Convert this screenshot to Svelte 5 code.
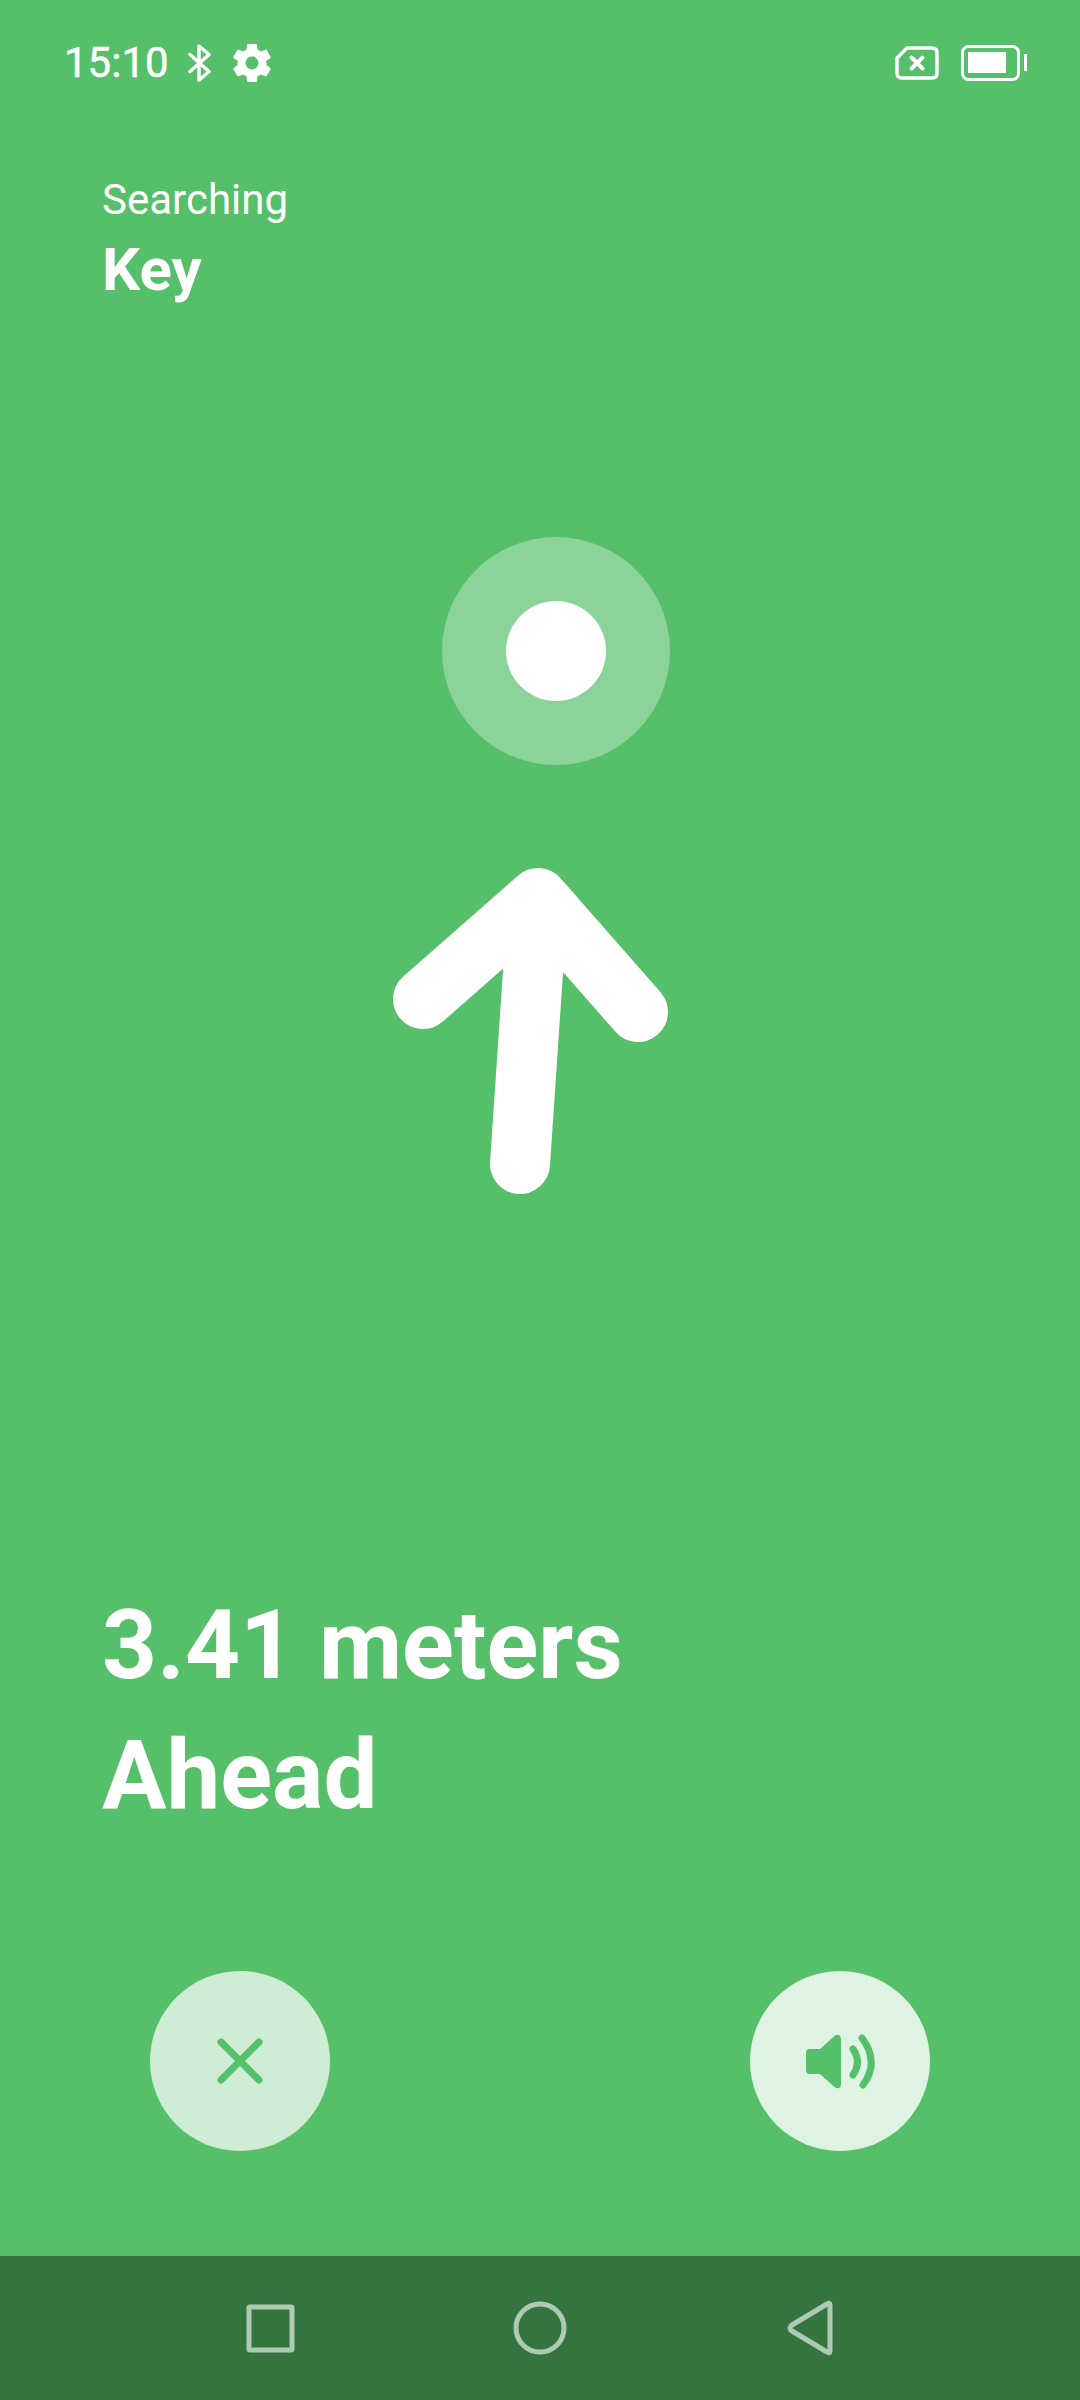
<script>
    const target = { name: "Key", distance: "3.41 meters", direction: "Ahead" };
</script>

<div class="screen">
    <div class="status-bar">
        <span class="clock">15:10</span>
        <svg class="ic-bt" viewBox="0 0 24 38" aria-hidden="true">
            <path d="M2 10.5 L21 27.5 L11 36 V2 L21 10.5 L2 27.5" />
        </svg>
        <svg class="ic-gear" viewBox="2.5 2.5 19 19" aria-hidden="true">
            <path d="M19.14 12.94c.04-.3.06-.61.06-.94 0-.32-.02-.64-.07-.94l2.03-1.58c.18-.14.23-.41.12-.61l-1.92-3.32c-.12-.22-.37-.29-.59-.22l-2.39.96c-.5-.38-1.03-.7-1.62-.94l-.36-2.54c-.04-.24-.24-.41-.48-.41h-3.84c-.24 0-.43.17-.47.41l-.36 2.54c-.59.24-1.13.57-1.62.94l-2.39-.96c-.22-.08-.47 0-.59.22L2.74 8.87c-.12.21-.08.47.12.61l2.03 1.58c-.05.3-.09.63-.09.94s.02.64.07.94l-2.03 1.58c-.18.14-.23.41-.12.61l1.92 3.32c.12.22.37.29.59.22l2.39-.96c.5.38 1.03.7 1.62.94l.36 2.54c.05.24.24.41.48.41h3.84c.24 0 .44-.17.47-.41l.36-2.54c.59-.24 1.13-.56 1.62-.94l2.39.96c.22.08.47 0 .59-.22l1.92-3.32c.12-.22.07-.47-.12-.61l-2.01-1.58zM12 15.2c-1.77 0-3.2-1.43-3.2-3.2s1.43-3.2 3.2-3.2 3.2 1.43 3.2 3.2-1.43 3.2-3.2 3.2z" />
        </svg>
        <span class="spacer"></span>
        <svg class="ic-sim" viewBox="0 0 44 34" aria-hidden="true">
            <path d="M12 2 H37 Q42 2 42 7 V27 Q42 32 37 32 H7 Q2 32 2 27 V12 Z" />
            <path class="x" d="M16.500 11.500 L27.500 22.500 M27.500 11.500 L16.500 22.500" />
        </svg>
        <svg class="ic-battery" viewBox="0 0 66 36" aria-hidden="true">
            <rect class="shell" x="1.500" y="1.500" width="56" height="33" rx="6" />
            <rect class="level" x="7" y="7" width="38" height="21" />
            <rect class="level" x="63" y="9" width="3" height="17" />
        </svg>
    </div>

    <header class="header">
        <div class="searching">Searching</div>
        <div class="name">{target.name}</div>
    </header>

    <svg class="compass" viewBox="0 0 1080 900" aria-hidden="true">
        <circle class="ring" cx="556" cy="351" r="114" />
        <circle class="dot" cx="556" cy="351" r="50" />
        <path class="arrow" d="M423 699 L538 598 L638 712 M538 598 L520 864" />
    </svg>

    <div class="reading">
        <div>{target.distance}</div>
        <div>{target.direction}</div>
    </div>

    <div class="actions">
        <button type="button" class="round close" aria-label="Close">
            <svg viewBox="0 0 180 180" aria-hidden="true">
                <path class="glyph-line" d="M71 71 L109 109 M109 71 L71 109" />
            </svg>
        </button>
        <button type="button" class="round sound" aria-label="Sound">
            <svg viewBox="0 0 180 180" aria-hidden="true">
                <path class="glyph-fill" d="M56 82 Q56 78 60 78 H70 L84.500 65 Q87 63 89 64 Q91 65 91 68 V113 Q91 116 89 117 Q87 118 84.500 116 L70 103 H60 Q56 103 56 99 Z" />
                <path class="glyph-line" d="M103 78 Q112 91 103 104" />
                <path class="glyph-line" d="M112 67 Q130 91 113 114" />
            </svg>
        </button>
    </div>

    <nav class="nav-bar">
        <svg viewBox="0 0 1080 144" aria-hidden="true">
            <rect x="249" y="51" width="43" height="43" rx="1" />
            <circle cx="540" cy="72" r="24" />
            <path d="M830 49 V95 Q830 98 827 96 L792 75 Q788 72 792 69 L827 48 Q830 46 830 49 Z" />
        </svg>
    </nav>
</div>

<style>
    :global(body) {
        margin: 0;
        background: #55bf69;
    }
    .screen {
        display: flex;
        flex-direction: column;
        width: 1080px;
        height: 2400px;
        overflow: hidden;
        background: #55bf69;
        color: #fff;
        font-family: Roboto, "Liberation Sans", sans-serif;
    }
    .status-bar {
        display: flex;
        align-items: center;
        height: 86px;
        padding: 40px 53px 0 64px;
        box-sizing: border-box;
        flex: none;
    }
    .clock {
        font-size: 42px;
        line-height: 50px;
        margin-right: 19px;
        -webkit-text-stroke: 0.5px #fff;
    }
    .ic-bt {
        width: 24px;
        height: 38px;
        margin-right: 21px;
    }
    .ic-bt path {
        fill: none;
        stroke: #fff;
        stroke-width: 3.5;
        stroke-linecap: round;
        stroke-linejoin: round;
    }
    .ic-gear {
        width: 38px;
        height: 38px;
        fill: #fff;
    }
    .spacer { flex: 1; }
    .ic-sim {
        width: 44px;
        height: 34px;
        margin-right: 22px;
    }
    .ic-sim path {
        fill: none;
        stroke: #fff;
        stroke-width: 3.5;
        stroke-linejoin: round;
    }
    .ic-sim .x {
        stroke-width: 4;
        stroke-linecap: round;
    }
    .ic-battery {
        width: 66px;
        height: 36px;
    }
    .shell {
        fill: none;
        stroke: #fff;
        stroke-width: 3;
    }
    .level { fill: #fff; }
    .header {
        padding: 86px 0 0 102px;
        flex: none;
    }
    .searching {
        font-size: 42px;
        line-height: 56px;
    }
    .name {
        margin-top: 4px;
        font-size: 60px;
        font-weight: 700;
        line-height: 76px;
    }
    .compass {
        display: block;
        width: 1080px;
        height: 900px;
        margin-top: -8px;
        flex: none;
    }
    .ring { fill: #8bd399; }
    .dot { fill: #fff; }
    .arrow {
        fill: none;
        stroke: #fff;
        stroke-width: 60;
        stroke-linecap: round;
        stroke-linejoin: round;
    }
    .reading {
        flex: none;
        padding-left: 102px;
        margin-top: 380px;
        font-size: 96px;
        font-weight: 700;
        line-height: 130px;
    }
    .actions {
        display: flex;
        justify-content: space-between;
        padding: 0 150px;
        margin-top: 131px;
        flex: none;
    }
    .round {
        display: block;
        width: 180px;
        height: 180px;
        padding: 0;
        border: none;
        border-radius: 50%;
    }
    .round svg {
        display: block;
        width: 180px;
        height: 180px;
    }
    .close { background: #cfedd4; }
    .sound { background: #dff3e2; }
    .glyph-line {
        fill: none;
        stroke: #55bf69;
        stroke-width: 7;
        stroke-linecap: round;
    }
    .glyph-fill { fill: #55bf69; }
    .nav-bar {
        margin-top: auto;
        height: 144px;
        background: #35743f;
        flex: none;
    }
    .nav-bar svg {
        display: block;
        width: 1080px;
        height: 144px;
        fill: none;
        stroke: #afcab4;
        stroke-width: 5;
        stroke-linejoin: round;
    }
</style>
